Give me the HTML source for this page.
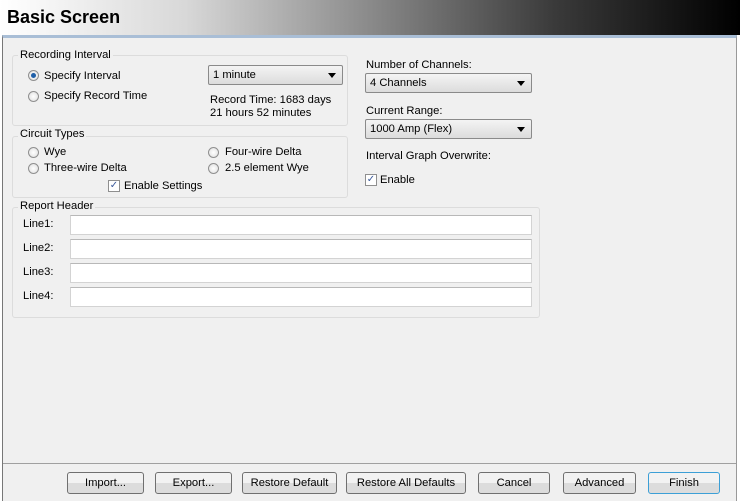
<!DOCTYPE html>
<html><head><style>
body{margin:0;width:740px;height:501px;background:#fff;font-family:"Liberation Sans",sans-serif;font-size:11.2px;line-height:15px;color:#000;position:relative;overflow:hidden}
.a{position:absolute}
.title{left:0;top:0;width:740px;height:35px;background:linear-gradient(to right,#fff 0%,#d8d8d8 25%,#8a8a8a 50%,#3a3a3a 75%,#000 100%);}
.title span{position:absolute;left:7px;top:6px;font-size:18px;line-height:22px;font-weight:bold;}
.body{left:2px;top:35px;width:735px;height:466px;background:#f0f0f0;border-left:1px solid #777;border-right:1px solid #999;border-top:3px solid #a9bed6;box-sizing:border-box}
.grp{border:1px solid #dcdcdc;border-radius:3px;box-sizing:border-box}
.lg{background:#f0f0f0;padding:0 2px}
.rad{width:11px;height:11px;border-radius:50%;border:1px solid #8f8f8f;background:radial-gradient(#fff,#ddd);box-sizing:border-box}
.rad.on::after{content:"";position:absolute;left:2px;top:2px;width:5px;height:5px;border-radius:50%;background:#1f5fa8}
.chk{width:12px;height:12px;border:1px solid #8f8f8f;background:#fff;box-sizing:border-box;font-size:10px;line-height:10px;text-align:center;color:#3b5a9c}
.sel{height:20px;border:1px solid #8a8a8a;border-radius:2px;background:linear-gradient(#f4f4f4,#dcdcdc);box-sizing:border-box;padding:2px 4px}
.sel::after{content:"";position:absolute;right:6px;top:7px;border:4px solid transparent;border-top:5px solid #000}
.inp{left:70px;width:462px;height:20px;background:#fff;border:1px solid #d3d3d3;border-top-color:#b8b8b8;box-sizing:border-box}
.btn{top:472px;height:22px;border:1px solid #707070;border-radius:3px;background:linear-gradient(#f2f2f2 50%,#dcdcdc 50%);box-sizing:border-box;text-align:center;line-height:20px}
</style></head><body>
<div class="a title"><span>Basic Screen</span></div>
<div class="a body"></div>
<div class="a" style="left:3px;top:463px;width:733px;height:1px;background:#a0a0a0"></div>

<div class="a grp" style="left:12px;top:55px;width:336px;height:71px"></div>
<div class="a lg" style="left:18px;top:48px">Recording Interval</div>
<div class="a rad on" style="left:28px;top:70px"></div><div class="a" style="left:44px;top:69px">Specify Interval</div>
<div class="a rad" style="left:28px;top:91px"></div><div class="a" style="left:44px;top:89px">Specify Record Time</div>
<div class="a sel" style="left:208px;top:65px;width:135px">1 minute</div>
<div class="a" style="left:210px;top:94px;line-height:13px">Record Time: 1683 days<br>21 hours 52 minutes</div>

<div class="a grp" style="left:12px;top:136px;width:336px;height:62px"></div>
<div class="a lg" style="left:18px;top:127px">Circuit Types</div>
<div class="a rad" style="left:28px;top:147px"></div><div class="a" style="left:44px;top:145px">Wye</div>
<div class="a rad" style="left:28px;top:163px"></div><div class="a" style="left:44px;top:161px">Three-wire Delta</div>
<div class="a rad" style="left:208px;top:147px"></div><div class="a" style="left:225px;top:145px">Four-wire Delta</div>
<div class="a rad" style="left:208px;top:163px"></div><div class="a" style="left:225px;top:161px">2.5 element Wye</div>
<div class="a chk" style="left:108px;top:180px">✓</div><div class="a" style="left:124px;top:179px">Enable Settings</div>

<div class="a" style="left:366px;top:58px">Number of Channels:</div>
<div class="a sel" style="left:365px;top:73px;width:167px">4 Channels</div>
<div class="a" style="left:366px;top:104px">Current Range:</div>
<div class="a sel" style="left:365px;top:119px;width:167px">1000 Amp (Flex)</div>
<div class="a" style="left:366px;top:149px">Interval Graph Overwrite:</div>
<div class="a chk" style="left:365px;top:174px">✓</div><div class="a" style="left:380px;top:173px">Enable</div>

<div class="a grp" style="left:12px;top:207px;width:528px;height:111px"></div>
<div class="a lg" style="left:18px;top:199px">Report Header</div>
<div class="a" style="left:23px;top:217px">Line1:</div><div class="a inp" style="top:215px"></div>
<div class="a" style="left:23px;top:241px">Line2:</div><div class="a inp" style="top:239px"></div>
<div class="a" style="left:23px;top:265px">Line3:</div><div class="a inp" style="top:263px"></div>
<div class="a" style="left:23px;top:289px">Line4:</div><div class="a inp" style="top:287px"></div>

<div class="a btn" style="left:67px;width:77px">Import...</div>
<div class="a btn" style="left:155px;width:77px">Export...</div>
<div class="a btn" style="left:242px;width:95px">Restore Default</div>
<div class="a btn" style="left:346px;width:120px">Restore All Defaults</div>
<div class="a btn" style="left:478px;width:72px">Cancel</div>
<div class="a btn" style="left:563px;width:73px">Advanced</div>
<div class="a btn" style="left:648px;width:72px;border-color:#3c9fd6">Finish</div>
</body></html>
